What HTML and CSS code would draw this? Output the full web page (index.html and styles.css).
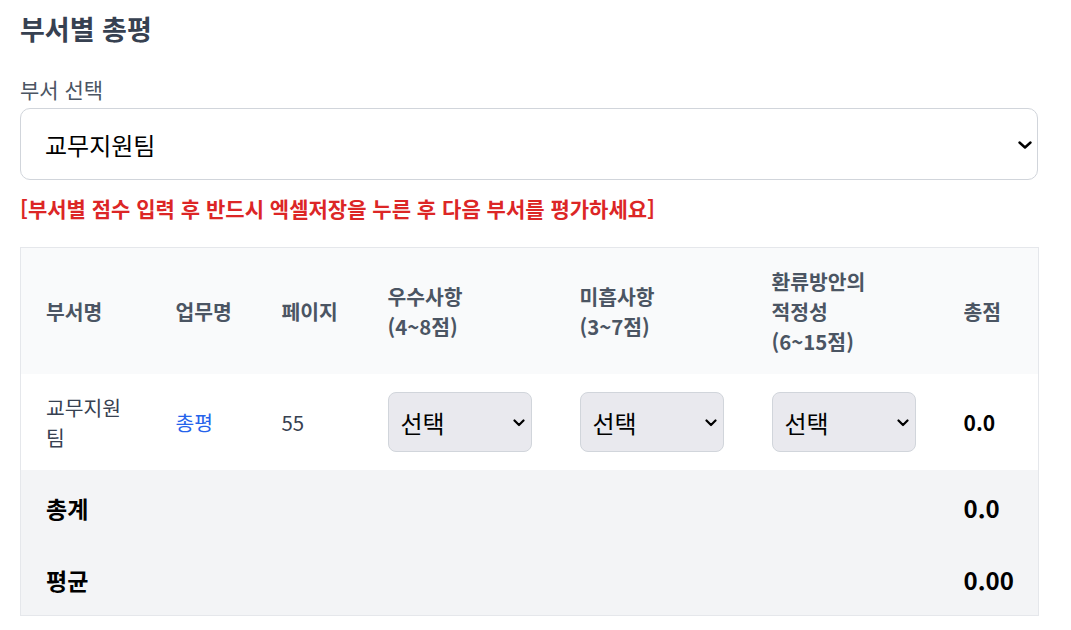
FILE: index.html
```html
<!DOCTYPE html>
<html lang="ko">
<head>
<meta charset="utf-8">
<title>부서별 총평</title>
<link rel="stylesheet" href="styles.css">
</head>
<body>
<div class="wrap">
  <h2 class="title">부서별 총평</h2>
  <label class="field-label" for="dept">부서 선택</label>
  <span class="select-box big">
    <select id="dept" class="dept-select">
      <option>교무지원팀</option>
    </select>
    <svg class="chev" width="14" height="8" viewBox="0 0 14 8"><path d="M1.5 1.5 L7 6.5 L12.5 1.5" fill="none" stroke="#000" stroke-width="2.4" stroke-linecap="round" stroke-linejoin="round"/></svg>
  </span>
  <p class="notice">[부서별 점수 입력 후 반드시 엑셀저장을 누른 후 다음 부서를 평가하세요]</p>
  <table class="score-table">
    <colgroup>
      <col class="c1"><col class="c2"><col class="c3"><col class="c4"><col class="c5"><col class="c6"><col class="c7">
    </colgroup>
    <thead>
      <tr>
        <th>부서명</th>
        <th>업무명</th>
        <th>페이지</th>
        <th>우수사항<br>(4~8점)</th>
        <th>미흡사항<br>(3~7점)</th>
        <th>환류방안의<br>적정성<br>(6~15점)</th>
        <th>총점</th>
      </tr>
    </thead>
    <tbody>
      <tr class="data-row">
        <td>교무지원팀</td>
        <td><a class="link" href="#">총평</a></td>
        <td>55</td>
        <td>
          <span class="select-box small">
            <select class="score-select"><option>선택</option></select>
            <svg class="chev" width="12" height="8" viewBox="0 0 12 8"><path d="M1.5 1.5 L6 6 L10.5 1.5" fill="none" stroke="#000" stroke-width="2.2" stroke-linecap="round" stroke-linejoin="round"/></svg>
          </span>
        </td>
        <td>
          <span class="select-box small">
            <select class="score-select"><option>선택</option></select>
            <svg class="chev" width="12" height="8" viewBox="0 0 12 8"><path d="M1.5 1.5 L6 6 L10.5 1.5" fill="none" stroke="#000" stroke-width="2.2" stroke-linecap="round" stroke-linejoin="round"/></svg>
          </span>
        </td>
        <td>
          <span class="select-box small">
            <select class="score-select"><option>선택</option></select>
            <svg class="chev" width="12" height="8" viewBox="0 0 12 8"><path d="M1.5 1.5 L6 6 L10.5 1.5" fill="none" stroke="#000" stroke-width="2.2" stroke-linecap="round" stroke-linejoin="round"/></svg>
          </span>
        </td>
        <td class="score">0.0</td>
      </tr>
    </tbody>
    <tfoot>
      <tr class="sum-row">
        <td colspan="6">총계</td>
        <td class="num">0.0</td>
      </tr>
      <tr class="avg-row">
        <td colspan="6">평균</td>
        <td class="num">0.00</td>
      </tr>
    </tfoot>
  </table>
</div>
</body>
</html>
```

FILE: styles.css
```css
* { box-sizing: border-box; }

html, body {
  margin: 0;
  padding: 0;
  background: #ffffff;
}

body {
  font-family: "Noto Sans CJK KR", "Noto Sans", sans-serif;
  color: #111827;
}

.wrap {
  width: 1018px;
  margin-left: 20px;
  display: flex;
  flex-direction: column;
  align-items: stretch;
}

.title {
  margin: 11px 0 0;
  font-size: 27px;
  line-height: 36px;
  font-weight: 700;
  color: #374151;
}

.field-label {
  margin-top: 28px;
  font-size: 21px;
  line-height: 28px;
  color: #4b5563;
}

.select-box {
  position: relative;
  display: block;
}

.select-box.big {
  margin-top: 5px;
}

.select-box.small {
  width: 144px;
}

.select-box .chev {
  position: absolute;
  top: 50%;
  pointer-events: none;
}

.select-box.big .chev {
  right: 6px;
  margin-top: -3px;
}

.select-box.small .chev {
  right: 7px;
  margin-top: -3px;
}

.dept-select,
.score-select {
  -webkit-appearance: none;
  appearance: none;
  display: block;
  width: 100%;
  font-family: "Noto Sans CJK KR", "Noto Sans", sans-serif;
  color: #000000;
  outline: none;
}

.dept-select {
  height: 72px;
  border: 1px solid #d1d5db;
  border-radius: 10px;
  background: #ffffff;
  padding: 0 30px 0 24px;
  font-size: 24px;
}

.notice {
  margin: 13px 0 0;
  font-size: 21px;
  line-height: 30px;
  font-weight: 700;
  color: #dc2626;
}

.score-table {
  margin-top: 24px;
  width: 100%;
  border-collapse: collapse;
  table-layout: fixed;
  border: 1px solid #e5e7eb;
}

.c1 { width: 130px; }
.c2 { width: 106px; }
.c3 { width: 106px; }
.c4 { width: 192px; }
.c5 { width: 192px; }
.c6 { width: 192px; }
.c7 { width: 100px; }

.score-table th {
  background: #f9fafb;
  padding: 18px 23px 18px 25px;
  text-align: left;
  vertical-align: middle;
  font-size: 20.4px;
  line-height: 30px;
  font-weight: 700;
  color: #4b5563;
}

.data-row td {
  background: #ffffff;
  padding: 18px 23px 18px 25px;
  vertical-align: middle;
  font-size: 20.4px;
  line-height: 30px;
  color: #374151;
}

.data-row td.score {
  font-weight: 700;
  font-size: 21px;
  color: #000000;
}

.link {
  color: #2563eb;
  text-decoration: none;
}

.score-select {
  height: 60px;
  border: 1px solid #d1d5db;
  border-radius: 8px;
  background: #e9e9ee;
  padding: 0 24px 0 12px;
  font-size: 24px;
}

.sum-row td,
.avg-row td {
  background: #f3f4f6;
  padding: 0 23px 0 25px;
  font-size: 23px;
  font-weight: 700;
  color: #000000;
  vertical-align: middle;
}

.sum-row td.num,
.avg-row td.num {
  font-size: 24px;
}

.sum-row td { height: 75px; }
.avg-row td { height: 70px; }
```
